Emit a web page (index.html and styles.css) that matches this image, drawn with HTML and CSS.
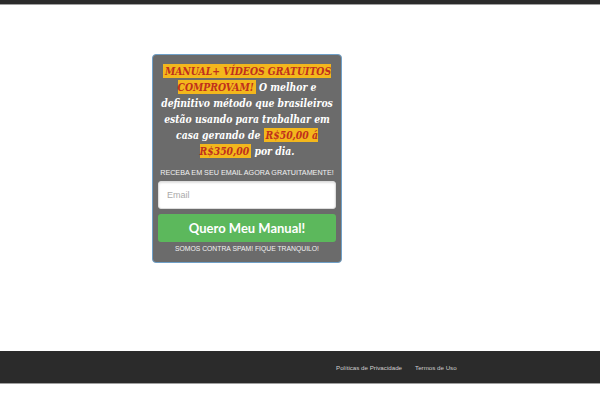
FILE: index.html
```html
<!DOCTYPE html>
<html lang="pt-BR">
<head>
<meta charset="utf-8">
<title>Manual</title>
<link rel="stylesheet" href="styles.css">
</head>
<body>
<div class="topbar"></div>
<main class="main">
  <div class="optin">
    <p class="headline"><span class="hl">MANUAL+ VÍDEOS GRATUITOS<br>COMPROVAM!</span> O melhor e<br>definitivo método que brasileiros<br>estão usando para trabalhar em<br>casa gerando de <span class="hl">R$50,00 á<br>R$350,00</span> por dia.</p>
    <p class="sub">RECEBA EM SEU EMAIL AGORA GRATUITAMENTE!</p>
    <input class="email" type="text" placeholder="Email">
    <button class="btn">Quero Meu Manual!</button>
    <p class="nospam">SOMOS CONTRA SPAM! FIQUE TRANQUILO!</p>
  </div>
</main>
<footer class="footer">
  <a href="#">Políticas de Privacidade</a>
  <a href="#">Termos de Uso</a>
</footer>
</body>
</html>
```
FILE: styles.css
```css
html, body {
  margin: 0;
  padding: 0;
  background: #fff;
}
body {
  font-family: "Liberation Sans", Arial, sans-serif;
}
.topbar {
  height: 4px;
  background: #2b2b2b;
  border-bottom: 1px solid #a0a0a0;
}
.main {
  height: 346px;
  box-sizing: border-box;
  padding: 49px 0 0 152px;
}
.optin {
  width: 190px;
  box-sizing: border-box;
  background: #6b6b6b;
  border: 1px solid #6fa0c8;
  border-radius: 4px;
  padding: 8px 5px 8px;
  display: flex;
  flex-direction: column;
  align-items: stretch;
}
.headline {
  margin: 0 -2px;
  text-align: center;
  color: #fff;
  font-family: "DejaVu Serif", serif;
  font-stretch: condensed;
  font-weight: bold;
  font-style: italic;
  font-size: 10.3px;
  line-height: 16px;
  white-space: nowrap;
}
.hl {
  background: #f3b71c;
  color: #c0301c;
  padding: 1px 2px;
}
.sub {
  margin: 9px 0 3px;
  text-align: center;
  color: #f2f2f2;
  font-size: 7.2px;
  line-height: 10px;
}
.email {
  height: 28px;
  box-sizing: border-box;
  border: 1px solid #ddd;
  border-radius: 3px;
  background: #fff;
  box-shadow: inset 0 1px 2px rgba(0,0,0,0.12);
  padding: 0 8px;
  font-family: "Liberation Sans", Arial, sans-serif;
  font-size: 9px;
  color: #555;
  outline: none;
}
.email::placeholder {
  color: #aaa;
}
.btn {
  margin-top: 5px;
  height: 28px;
  border: 0;
  border-radius: 3px;
  background: #5cb85c;
  color: #fff;
  font-family: Lato, "Open Sans", sans-serif;
  font-weight: bold;
  font-size: 13px;
  padding: 0;
}
.nospam {
  margin: 2px 0 0;
  text-align: center;
  color: #f2f2f2;
  font-size: 6.8px;
  line-height: 10px;
}
.footer {
  height: 32px;
  background: #2b2b2b;
  border-bottom: 1px solid #a0a0a0;
  display: flex;
  align-items: center;
  gap: 13px;
  padding-left: 336px;
}
.footer a {
  color: #d0d0d0;
  text-decoration: none;
  font-size: 6.2px;
}
```
